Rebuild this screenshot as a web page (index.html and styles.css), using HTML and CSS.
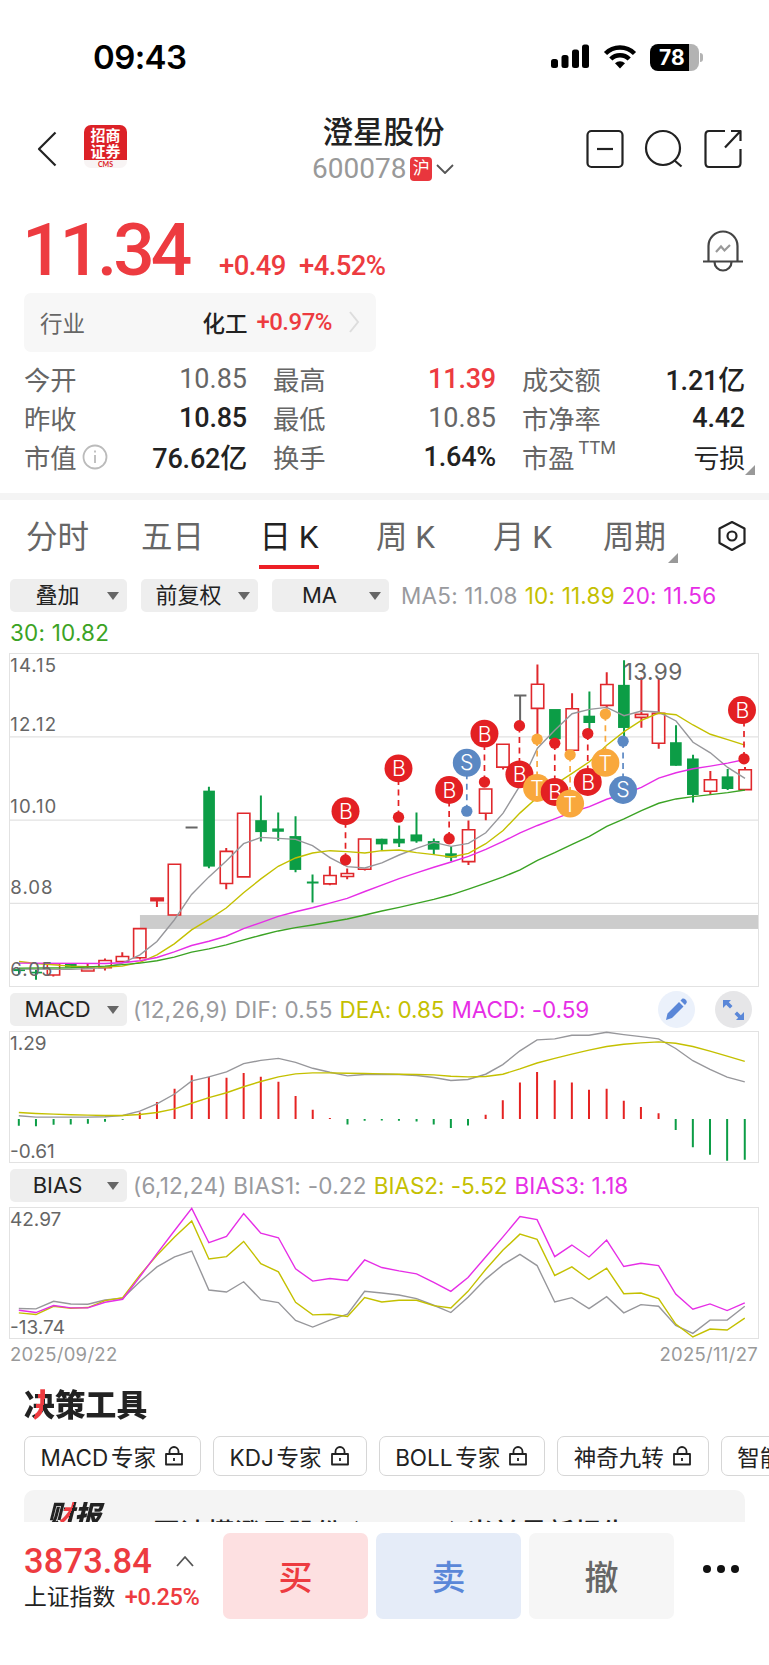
FILE: index.html
```
<!DOCTYPE html>
<html lang="zh-CN">

<head>
    <meta charset="utf-8">
    <meta name="viewport" content="width=device-width, initial-scale=1.0">
    <title>澄星股份 600078</title>
    <link rel="stylesheet" href="styles.css">
</head>

<body>
    <div class="statusbar">
        <span class="clock">09:43</span>
        <div class="status-icons">
            <svg width="40" height="26" viewBox="0 0 40 26">
                <rect x="1" y="15" width="7" height="9" rx="2.5" />
                <rect x="11.5" y="11" width="7" height="13" rx="2.5" />
                <rect x="22" y="5.5" width="7" height="18.5" rx="2.5" />
                <rect x="32" y="0.5" width="7" height="23.5" rx="2.5" />
            </svg>
            <svg class="wifi" width="34" height="26" viewBox="0 0 34 26">
                <path d="M2.5 9.5 A20.5 20.5 0 0 1 31.5 9.5" />
                <path d="M7.8 15 A13 13 0 0 1 26.2 15" />
                <path class="wifi-dot" d="M12 19.2 A7.5 7.5 0 0 1 22 19.2 L17 24.5 Z" />
            </svg>
            <div class="battery"><span>78</span></div>
        </div>
    </div>

    <div class="header">
        <svg class="line back" width="22" height="36" viewBox="0 0 22 36">
            <path d="M19.5 1.5 L3 18 L19.5 34.5" />
        </svg>
        <div class="broker">
            <b>招商<br>证券</b>
            <i>CMS</i>
        </div>
        <div class="title">
            <h1>澄星股份</h1>
            <div class="code">
                <span>600078</span>
                <em>沪</em>
                <svg class="line" width="20" height="12" viewBox="0 0 20 12">
                    <path d="M2 2 L10 10 L18 2" />
                </svg>
            </div>
        </div>
        <div class="actions">
            <svg class="line" width="40" height="40" viewBox="0 0 40 40">
                <rect x="2.5" y="2" width="35" height="36" rx="4" />
                <path d="M12 20 H28" />
            </svg>
            <svg class="line" width="40" height="40" viewBox="0 0 40 40">
                <circle cx="19" cy="19" r="17" />
                <path d="M30 31 L37.5 37.5" />
            </svg>
            <svg class="line" width="40" height="40" viewBox="0 0 40 40">
                <path d="M22 2 H6 Q2.5 2 2.5 6 V34 Q2.5 38 6 38 H34 Q37.5 38 37.5 34 V20" />
                <path d="M28 2 H37.5 V12 M37.5 2 L22 18.5" />
            </svg>
        </div>
    </div>

    <div class="quote">
        <div class="price">
            <strong>11.34</strong>
            <span class="diff">+0.49</span>
            <span class="pct">+4.52%</span>
        </div>
        <svg class="bell" width="42" height="42" viewBox="0 0 42 42">
            <path d="M1 31.5 H41 M6.5 31 V16 A14.5 14.5 0 0 1 35.5 16 V31 M12.5 32 A8.5 8.5 0 0 0 29.5 32" />
            <path class="bell-mark" d="M14 22 L19 16.5 L22.5 20.5 L28 15" />
        </svg>
    </div>

    <div class="industry">
        <span class="muted">行业</span>
        <span class="name">化工</span>
        <span class="up">+0.97%</span>
        <svg width="12" height="22" viewBox="0 0 12 22">
            <path d="M2 1 L10 11 L2 21" />
        </svg>
    </div>

    <div class="stats">
        <label>今开</label><span class="flat">10.85</span>
        <label>最高</label><span class="up">11.39</span>
        <label>成交额</label><span>1.21亿</span>
        <label>昨收</label><span>10.85</span>
        <label>最低</label><span class="flat">10.85</span>
        <label>市净率</label><span>4.42</span>
        <label>市值<svg width="26" height="26" viewBox="0 0 26 26">
                <circle cx="13" cy="13" r="11.5" />
                <path d="M13 11 V19 M13 6.5 V8.5" />
            </svg></label><span>76.62亿</span>
        <label>换手</label><span>1.64%</span>
        <label>市盈<sup>TTM</sup></label><span class="corner">亏损</span>
    </div>

    <div class="tabs">
        <span>分时</span>
        <span>五日</span>
        <span class="active">日 K</span>
        <span>周 K</span>
        <span>月 K</span>
        <span class="corner">周期</span>
        <svg class="line" width="32" height="32" viewBox="0 0 32 32">
            <path d="M16 2 L28.5 8.5 V23 L16 30 L3.5 23 V8.5 Z" />
            <circle cx="16" cy="16" r="4.5" />
        </svg>
    </div>

    <div class="indicators">
        <span class="select">叠加</span>
        <span class="select">前复权</span>
        <span class="select">MA</span>
        <span class="ma5">MA5: 11.08</span>
        <span class="ma10">10: 11.89</span>
        <span class="ma20">20: 11.56</span>
    </div>
    <div class="ma30">30: 10.82</div>

    <div class="chart kline">
        <svg viewBox="30 38 2245 1001" preserveAspectRatio="none">
            <path class="grid" d="M30 288 H2275 M30 539 H2275 M30 790 H2275" />
            <rect class="gap" x="420" y="825" width="1855" height="42" />

            <!-- candles: rising -->
            <g class="rise">
                <path d="M160 1006 V1010 M263 972 V985 M315 956 V962 M315 984 V992 M367 937 V950 M420 954 V959 M471 782 V801 M679 623 V633 M679 730 V747 M990 678 V706 M990 731 V735 M1042 685 V699 M1042 709 V717 M1095 687 V691 M1406 540 V568 M1406 664 V674 M1458 518 V539 M1510 379 V386" />
                <path d="M1613 70 V129 M1613 202 V282 M1717 156 V203 M1821 93 V130 M1821 193 V202 M1925 108 V219 M1925 230 V260 M1977 112 V217 M1977 307 V324 M2132 391 V417 M2132 452 V462 M2236 379 V387" />
                <rect x="142" y="972" width="37" height="34" />
                <rect x="245" y="986" width="37" height="8" />
                <rect x="297" y="962" width="37" height="22" />
                <rect x="349" y="950" width="37" height="15" />
                <rect x="401" y="866" width="37" height="88" />
                <rect class="solid" x="453" y="774" width="37" height="8" />
                <rect x="505" y="672" width="37" height="153" />
                <rect x="661" y="633" width="37" height="97" />
                <rect x="713" y="518" width="37" height="192" />
                <rect x="972" y="706" width="37" height="25" />
                <rect x="1024" y="700" width="37" height="9" />
                <rect x="1076" y="596" width="37" height="91" />
                <rect x="1388" y="568" width="37" height="96" />
                <rect x="1439" y="445" width="37" height="73" />
                <rect x="1491" y="310" width="37" height="69" />
                <rect x="1595" y="129" width="37" height="73" />
                <rect x="1699" y="203" width="37" height="125" />
                <rect x="1803" y="130" width="37" height="63" />
                <rect x="1907" y="220" width="37" height="9" />
                <rect x="1958" y="217" width="37" height="90" />
                <rect x="2114" y="417" width="37" height="35" />
                <rect x="2218" y="387" width="37" height="60" />
            </g>

            <!-- candles: falling -->
            <g class="fall">
                <path d="M57 985 V1003 M108 990 V1020 M627 438 V684 M783 465 V603 M835 516 V601 M887 527 V696 M938 703 V787 M1146 595 V630 M1198 555 V620 M1250 516 V607 M1302 594 V643 M1354 618 V663" />
                <path d="M1769 151 V265 M1873 57 V292 M2029 253 V375 M2080 342 V486 M2184 385 V448" />
                <rect x="40" y="988" width="35" height="6" />
                <rect x="91" y="996" width="35" height="5" />
                <rect x="195" y="972" width="35" height="11" />
                <rect x="610" y="450" width="35" height="229" />
                <rect x="766" y="539" width="35" height="36" />
                <rect x="817" y="564" width="35" height="10" />
                <rect x="869" y="587" width="35" height="102" />
                <rect x="921" y="724" width="35" height="6" />
                <rect x="1128" y="595" width="35" height="17" />
                <rect x="1180" y="595" width="35" height="14" />
                <rect x="1232" y="582" width="35" height="21" />
                <rect x="1284" y="602" width="35" height="26" />
                <rect x="1336" y="639" width="35" height="13" />
                <rect x="1648" y="204" width="35" height="91" />
                <rect x="1751" y="224" width="35" height="22" />
                <rect x="1855" y="131" width="35" height="130" />
                <rect x="2011" y="304" width="35" height="71" />
                <rect x="2062" y="353" width="35" height="110" />
                <rect x="2166" y="407" width="35" height="38" />
            </g>
            <path class="even" d="M557 561 H593 M1543 163 H1580 M1561 163 V242" />

            <polyline class="l1" points="57,988 212,989 315,984 367,970 420,945 471,905 523,840 575,763 627,710 679,662 731,610 783,591 835,594 887,597 938,616 990,652 1042,679 1095,683 1146,668 1198,644 1250,624 1302,606 1354,618 1406,609 1458,577 1510,518 1561,434 1613,322 1665,268 1717,218 1769,205 1821,199 1873,224 1925,210 1977,213 2029,240 2080,304 2132,336 2184,380 2236,413" />
            <polyline class="l2" points="57,965 108,971 212,979 315,982 367,979 420,968 471,945 523,912 575,870 627,838 679,804 731,758 783,716 835,678 887,653 938,638 990,631 1042,634 1095,638 1146,631 1198,629 1250,637 1302,643 1354,650 1406,639 1458,610 1510,570 1561,517 1613,470 1665,432 1717,398 1769,363 1821,313 1873,272 1925,238 1977,216 2029,221 2080,252 2132,280 2184,296 2236,313" />
            <polyline class="l3" points="57,970 315,971 367,969 420,963 471,953 523,936 575,917 627,904 679,889 731,866 783,848 835,829 887,815 938,803 990,789 1042,775 1095,754 1146,735 1198,715 1250,698 1302,681 1354,665 1406,648 1458,627 1510,603 1561,577 1613,555 1665,535 1717,515 1769,498 1821,476 1873,460 1925,440 1977,412 2029,396 2080,384 2132,376 2184,367 2236,356" />
            <polyline class="l4" points="57,985 212,984 315,979 420,970 471,963 523,952 575,937 627,927 679,915 731,900 783,886 835,873 887,863 938,855 990,846 1042,837 1095,825 1146,813 1198,802 1250,790 1302,778 1354,764 1406,747 1458,729 1510,710 1561,689 1613,660 1665,637 1717,612 1769,588 1821,558 1873,535 1925,510 1977,488 2029,475 2080,468 2132,462 2184,456 2236,448" />

            <!-- trade markers -->
            <g class="mark buy">
                <path d="M1037 512 V659 M1196 383 V530 M1348 448 V595 M1454 278 V424 M1559 401 V254 M1665 454 V307 M1764 424 V278 M2233 207 V354" />
                <circle cx="1037" cy="659" r="17" />
                <circle cx="1196" cy="530" r="17" />
                <circle cx="1348" cy="595" r="17" />
                <circle cx="1454" cy="424" r="17" />
                <circle cx="1559" cy="254" r="17" />
                <circle cx="1665" cy="307" r="17" />
                <circle cx="1764" cy="278" r="17" />
                <circle cx="2233" cy="354" r="17" />
            </g>
            <g class="mark both">
                <path d="M1612 442 V295 M1711 489 V342 M1817 366 V219" />
                <circle cx="1612" cy="295" r="17" />
                <circle cx="1711" cy="342" r="17" />
                <circle cx="1817" cy="219" r="17" />
            </g>
            <g class="mark sell">
                <path d="M1401 366 V512 M1870 448 V301" />
                <circle cx="1401" cy="512" r="17" />
                <circle cx="1870" cy="301" r="17" />
            </g>
            <g class="mark buy"><circle cx="1037" cy="512" r="42" /><text x="1038" y="536">B</text></g>
            <g class="mark buy"><circle cx="1196" cy="383" r="42" /><text x="1197" y="407">B</text></g>
            <g class="mark buy"><circle cx="1348" cy="448" r="42" /><text x="1349" y="472">B</text></g>
            <g class="mark sell"><circle cx="1401" cy="366" r="42" /><text x="1401" y="388">S</text></g>
            <g class="mark buy"><circle cx="1454" cy="278" r="42" /><text x="1455" y="302">B</text></g>
            <g class="mark buy"><circle cx="1559" cy="401" r="42" /><text x="1560" y="425">B</text></g>
            <g class="mark both"><circle cx="1612" cy="442" r="42" /><text x="1612" y="466">T</text></g>
            <g class="mark buy"><circle cx="1665" cy="454" r="42" /><text x="1666" y="478">B</text></g>
            <g class="mark both"><circle cx="1711" cy="489" r="42" /><text x="1711" y="513">T</text></g>
            <g class="mark buy"><circle cx="1764" cy="424" r="42" /><text x="1765" y="448">B</text></g>
            <g class="mark both"><circle cx="1817" cy="366" r="42" /><text x="1817" y="390">T</text></g>
            <g class="mark sell"><circle cx="1870" cy="448" r="42" /><text x="1870" y="470">S</text></g>
            <g class="mark buy"><circle cx="2227" cy="207" r="42" /><text x="2228" y="231">B</text></g>

            <g class="axis">
                <text x="31" y="93">14.15</text>
                <text x="31" y="271">12.12</text>
                <text x="31" y="517">10.10</text>
                <text x="31" y="763">8.08</text>
                <text x="31" y="1009">6.05</text>
                <text class="peak" x="1872" y="117">13.99</text>
            </g>
        </svg>
    </div>

    <div class="indicators sub">
        <span class="select">MACD</span>
        <span class="ma5">(12,26,9) DIF: 0.55</span>
        <span class="ma10">DEA: 0.85</span>
        <span class="ma20">MACD: -0.59</span>
        <div class="tools">
            <svg width="37" height="37" viewBox="0 0 37 37">
                <circle class="blue-bg" cx="18.5" cy="18.5" r="18.5" />
                <path class="blue" d="M8 29 L9.5 22.5 L21 11 L25.5 15.5 L14 27 Z M22.5 9.5 L24.5 7.5 Q26 7 27.5 8.5 Q29.5 10.5 28.5 12 L27 14 Z" />
            </svg>
            <svg width="37" height="37" viewBox="0 0 37 37">
                <circle class="gray-bg" cx="18.5" cy="18.5" r="18.5" />
                <path class="blue" d="M8 9 H16 L13.8 11.2 L17.5 15 L15 17.5 L11.2 13.8 L8 17 Z M29 29 H21 L23.2 26.8 L19.5 23 L22 20.5 L25.8 24.2 L29 21 Z" />
            </svg>
        </div>
    </div>
    <div class="chart">
        <svg viewBox="20 154 1527 394" preserveAspectRatio="none">
            <path class="bar-up" d="M285 418 V398 M320 418 V366 M356 418 V326 M391 418 V285 M426 418 V290 M462 418 V293 M497 418 V278 M532 418 V290 M568 418 V305 M603 418 V348 M638 418 V390 M673 418 V415 M991 418 V405 M1026 418 V361 M1061 418 V307 M1096 418 V275 M1132 418 V300 M1167 418 V307 M1202 418 V329 M1238 418 V326 M1273 418 V362 M1308 418 V381 M1344 418 V400" />
            <path class="bar-down" d="M38 418 V438 M73 418 V440 M109 418 V435 M144 418 V434 M179 418 V432 M214 418 V426 M250 418 V420 M709 418 V434 M744 418 V423 M779 418 V422 M814 418 V423 M850 418 V425 M885 418 V434 M920 418 V445 M955 418 V437 M1379 418 V451 M1414 418 V503 M1449 418 V526 M1484 418 V544 M1520 418 V541" />
            <polyline class="l1" points="38,408 73,412 109,412 144,412 179,412 214,411 250,407 285,394 320,372 356,342 391,302 426,290 462,275 497,250 532,240 568,234 603,246 638,264 673,276 709,287 744,283 779,282 814,283 850,286 885,292 920,301 955,298 991,282 1026,253 1061,211 1096,178 1132,175 1167,164 1202,164 1238,155 1273,162 1308,168 1344,175 1379,204 1414,241 1449,267 1484,291 1520,305" />
            <polyline class="l2" points="38,398 73,401 109,403 144,405 179,406 214,407 250,407 285,404 320,398 356,387 391,370 426,353 462,338 497,320 532,304 568,290 603,281 638,278 673,278 709,279 744,280 779,281 814,282 850,283 885,284 920,288 955,290 991,289 1026,282 1061,266 1096,248 1132,234 1167,221 1202,209 1238,198 1273,191 1308,187 1344,184 1379,188 1414,198 1449,212 1484,227 1520,243" />
        </svg>
        <span class="max">1.29</span>
        <span class="min">-0.61</span>
    </div>

    <div class="indicators sub">
        <span class="select">BIAS</span>
        <span class="ma5">(6,12,24) BIAS1: -0.22</span>
        <span class="ma10">BIAS2: -5.52</span>
        <span class="ma20">BIAS3: 1.18</span>
    </div>
    <div class="chart">
        <svg viewBox="20 142 1527 393" preserveAspectRatio="none">
            <polyline class="l1" points="38,446 73,447 109,424 144,432 179,433 214,420 250,415 285,365 320,320 356,290 391,272 426,390 462,396 497,365 532,419 568,428 603,482 638,502 673,481 709,463 744,394 779,399 814,405 850,416 885,436 920,458 955,412 991,357 1026,314 1061,282 1096,316 1132,426 1167,413 1202,446 1238,410 1273,459 1308,434 1344,439 1379,497 1414,521 1449,481 1484,481 1520,439" />
            <polyline class="l2" points="38,459 73,464 109,439 144,445 179,443 214,422 250,413 285,345 320,285 356,230 391,181 426,296 462,289 497,243 532,310 568,335 603,427 638,465 673,463 709,470 744,413 779,426 814,421 850,421 885,437 920,444 955,394 991,328 1026,270 1061,221 1096,237 1132,346 1167,320 1202,358 1238,324 1273,401 1308,399 1344,416 1379,493 1414,532 1449,508 1484,511 1520,475" />
            <polyline class="l3" points="38,451 73,458 109,437 144,444 179,444 214,427 250,418 285,350 320,280 356,210 391,143 426,247 462,228 497,159 532,218 568,232 603,326 638,363 673,355 709,361 744,299 779,322 814,332 850,341 885,367 920,394 955,352 991,290 1026,230 1061,168 1096,177 1132,289 1167,254 1202,290 1238,239 1273,319 1308,309 1344,316 1379,402 1414,448 1449,432 1484,452 1520,429" />
        </svg>
        <span class="max">42.97</span>
        <span class="min">-13.74</span>
    </div>
    <div class="dates"><span>2025/09/22</span><span>2025/11/27</span></div>

    <h2>决策工具</h2>
    <div class="chips">
        <span class="chip">MACD 专家<svg class="line" viewBox="0 0 20 20"><path d="M2 8 H18 V18.5 H2 Z M5.5 8 V5.5 A4.5 4.5 0 0 1 14.5 5.5 V8 M10 12 V15" /></svg></span>
        <span class="chip">KDJ 专家<svg class="line" viewBox="0 0 20 20"><path d="M2 8 H18 V18.5 H2 Z M5.5 8 V5.5 A4.5 4.5 0 0 1 14.5 5.5 V8 M10 12 V15" /></svg></span>
        <span class="chip">BOLL 专家<svg class="line" viewBox="0 0 20 20"><path d="M2 8 H18 V18.5 H2 Z M5.5 8 V5.5 A4.5 4.5 0 0 1 14.5 5.5 V8 M10 12 V15" /></svg></span>
        <span class="chip">神奇九转<svg class="line" viewBox="0 0 20 20"><path d="M2 8 H18 V18.5 H2 Z M5.5 8 V5.5 A4.5 4.5 0 0 1 14.5 5.5 V8 M10 12 V15" /></svg></span>
        <span class="chip">智能</span>
    </div>
    <div class="report">
        <b>财报</b>
        <span>一图读懂澄星股份 (600078) 当前最新报告</span>
    </div>

    <div class="footer">
        <div class="index">
            <div class="index-value">3873.84
                <svg class="line" width="20" height="16" viewBox="0 0 20 16">
                    <path d="M2 13 L10 4 L18 13" />
                </svg>
            </div>
            <div class="index-name">上证指数 <span class="up">+0.25%</span></div>
        </div>
        <button class="buy-btn">买</button>
        <button class="sell-btn">卖</button>
        <button class="cancel-btn">撤</button>
        <div class="more"><i></i><i></i><i></i></div>
    </div>
</body>

</html>
```
FILE: styles.css
```
* {
    box-sizing: border-box;
}

body {
    margin: 0;
    width: 769px;
    height: 1665px;
    overflow: hidden;
    display: flex;
    flex-direction: column;
    background: #fff;
    color: #222;
    font-family: Roboto, "Noto Sans CJK SC", sans-serif;
}

body > * {
    flex-shrink: 0;
}

svg {
    display: block;
    flex-shrink: 0;
}

.line {
    fill: none;
    stroke: #222;
    stroke-width: 2.2;
    stroke-linejoin: round;
}

.up {
    color: #ed3b40;
}

/* status bar */
.statusbar {
    height: 116px;
    padding: 0 70px 2px 93px;
    display: flex;
    justify-content: space-between;
    align-items: center;
    color: #000;
}

.clock {
    font: 600 33px Inter, sans-serif;
    letter-spacing: -0.6px;
}

.status-icons {
    display: flex;
    align-items: center;
    gap: 13px;
}

.wifi {
    fill: none;
    stroke: #000;
    stroke-width: 4.5;
}

.wifi .wifi-dot {
    fill: #000;
    stroke: none;
}

.battery {
    position: relative;
    width: 49px;
    height: 27px;
    border-radius: 8px;
    background: linear-gradient(90deg, #000 79%, #b3b3b3 79%);
    color: #fff;
    font: 700 21px/27px Inter, sans-serif;
    padding-left: 9px;
}

.battery::after {
    content: "";
    position: absolute;
    right: -4px;
    top: 9px;
    width: 3px;
    height: 9px;
    border-radius: 0 4px 4px 0;
    background: #b3b3b3;
}

/* header */
.header {
    height: 96px;
    padding: 0 26px 0 36px;
    display: grid;
    grid-template-columns: 48px 228px 143px 1fr;
    align-items: start;
}

.back {
    margin-top: 15px;
}

.broker {
    margin-top: 9px;
    width: 43px;
    height: 43px;
    border-radius: 7px;
    overflow: hidden;
    background: linear-gradient(#dc2127 35px, #f8f4f4 35px);
    color: #fff;
    text-align: center;
}

.broker b {
    display: block;
    height: 35px;
    padding-top: 2px;
    font: 700 15px/16px "Noto Sans CJK SC", sans-serif;
}

.broker i {
    display: block;
    font: 700 7px/8px Lato, sans-serif;
    color: #dc2127;
}

.title {
    padding-top: 1px;
    text-align: center;
}

h1 {
    margin: 0;
    font-size: 30.5px;
    font-weight: 500;
    line-height: 32px;
    white-space: nowrap;
}

.code {
    margin-top: 6px;
    display: flex;
    align-items: center;
    color: #999;
    font-size: 28px;
    line-height: 28px;
}

.code em {
    width: 24px;
    height: 24px;
    margin: 0 3px 0 4px;
    border-radius: 4px;
    background: #e9363d;
    color: #fff;
    font-size: 17px;
    line-height: 23px;
    font-style: normal;
}

.code .line {
    stroke: #555;
    stroke-width: 1.8;
}

.actions {
    display: flex;
    justify-content: flex-end;
    gap: 19px;
    margin-top: 13px;
}

/* quote */
.quote {
    height: 81px;
    padding: 0 25px 0 22px;
    display: flex;
    justify-content: space-between;
}

.price {
    display: flex;
    align-items: baseline;
    color: #ed3b40;
}

.price strong {
    width: 197px;
    font-size: 73px;
    line-height: 76px;
    font-weight: 500;
    letter-spacing: -4px;
}

.diff,
.pct {
    width: 80px;
    font-size: 27.5px;
    font-weight: 500;
    letter-spacing: -0.6px;
}

.bell {
    margin-top: 18px;
    fill: none;
    stroke: #444;
    stroke-width: 2.2;
}

.bell .bell-mark {
    stroke: #999;
}

.industry {
    width: 352px;
    height: 59px;
    margin-left: 24px;
    padding: 0 16px 1px;
    display: flex;
    align-items: center;
    border-radius: 7px;
    background: #f7f7f7;
    font-size: 22.5px;
}

.muted {
    flex: 1;
    color: #666;
}

.name {
    font-weight: 500;
    margin-right: 9px;
}

.industry .up {
    font-size: 24px;
    font-weight: 500;
    letter-spacing: -0.5px;
    margin-right: 16px;
}

.industry svg {
    fill: none;
    stroke: #ddd;
    stroke-width: 2;
}

.stats {
    height: 141px;
    padding: 7px 24px 0;
    display: grid;
    grid-template-columns: 90px 159px 90px 159px 90px 133px;
    grid-auto-rows: 39px;
    align-items: center;
    font-size: 26.3px;
}

.stats label {
    display: flex;
    align-items: center;
    color: #666;
    white-space: nowrap;
}

.stats label svg {
    margin-left: 5px;
    fill: none;
    stroke: #bbb;
    stroke-width: 1.8;
}

.stats sup {
    font-size: 18px;
    line-height: 18px;
    margin: -18px 0 0 4px;
}

.stats span {
    text-align: right;
    font-weight: 500;
    font-size: 27px;
    letter-spacing: -0.2px;
    padding-right: 26px;
}

.stats span:nth-of-type(3n) {
    padding-right: 0;
}

.stats .flat {
    color: #666;
    font-weight: 400;
    letter-spacing: 0;
}

.corner {
    position: relative;
}

.stats .corner {
    font-size: 26px;
    font-weight: 400;
}

.corner::after {
    content: "";
    position: absolute;
    right: -10px;
    bottom: 0;
    border-left: 10px solid transparent;
    border-bottom: 10px solid #999;
}

/* period tabs */
.tabs {
    height: 86px;
    border-top: 7px solid #f4f4f4;
    padding-left: 26px;
    display: grid;
    grid-template-columns: 115px 118px 117px 117px 110px 112px 1fr;
    justify-items: start;
    align-items: start;
    font-size: 31.5px;
    line-height: 76px;
    color: #666;
    white-space: nowrap;
}

.tabs .active {
    width: 60px;
    height: 69px;
    border-bottom: 4px solid #ed2026;
    text-align: center;
    color: #222;
}

.tabs .corner::after {
    bottom: 13px;
    right: -12px;
}

.tabs svg {
    margin: 20px 0 0 1px;
}

/* indicator rows */
.indicators {
    height: 33px;
    padding-left: 10px;
    display: flex;
    align-items: center;
    font-family: Inter, "Noto Sans CJK SC", sans-serif;
    font-size: 22.5px;
    letter-spacing: 0.2px;
    white-space: nowrap;
}

.select {
    position: relative;
    width: 117px;
    height: 33px;
    margin-right: 14px;
    padding-right: 22px;
    border-radius: 5px;
    background: #eee;
    text-align: center;
    line-height: 33px;
    font-size: 22px;
    letter-spacing: 0;
}

.select::after {
    content: "";
    position: absolute;
    right: 8px;
    top: 13px;
    border: 6px solid transparent;
    border-top: 8px solid #666;
    border-bottom: 0;
}

.ma5 {
    margin-left: -2px;
    color: #999a9e;
    margin-right: 7px;
}

.ma10 {
    color: #c4c000;
    margin-right: 7px;
}

.ma20 {
    color: #e62ee6;
}

.ma30 {
    height: 41px;
    padding-left: 10px;
    color: #3ba324;
    font: 22.5px/41px Inter, sans-serif;
    letter-spacing: 0.2px;
}

.sub {
    margin: 6px 0 5px;
    letter-spacing: -0.05px;
}

.sub .ma5 {
    letter-spacing: 0.25px;
}

.sub .select {
    margin-right: 8px;
}

.tools {
    margin: 0 17px 0 auto;
    display: flex;
    gap: 20px;
}

.blue-bg {
    fill: #ebf1fb;
}

.gray-bg {
    fill: #e6e6e8;
}

.blue {
    fill: #5a87d8;
}

/* charts */
.chart {
    position: relative;
    width: 750px;
    height: 132px;
    margin-left: 9px;
    border: 1px solid #e2e2e2;
}

.kline {
    height: 334px;
}

.chart svg {
    width: 100%;
    height: 100%;
    overflow: visible;
}

.chart path,
.chart polyline,
.rise rect {
    fill: none;
    stroke-width: 1.4px;
    vector-effect: non-scaling-stroke;
}

.chart .grid {
    stroke: #e2e2e2;
}

.gap {
    fill: #ccc;
}

.rise path,
.rise rect {
    stroke: #e0282c;
}

.rise rect {
    fill: #fff;
    stroke-width: 1.6px;
}

.rise .solid {
    fill: #e0282c;
}

.fall {
    fill: #0c9d46;
    stroke: #0c9d46;
}

.rise path,
.fall path,
.even {
    stroke-width: 2px !important;
}

.fall rect {
    stroke: none;
}

.even {
    stroke: #666;
}

.l1 {
    stroke: #97979b;
}

.l2 {
    stroke: #c4c000;
}

.l3 {
    stroke: #e62ee6;
}

.l4 {
    stroke: #3ba324;
}

.bar-up {
    stroke: #e52322;
    stroke-width: 2px !important;
}

.bar-down {
    stroke: #0c9d46;
    stroke-width: 2px !important;
}

.mark path {
    stroke-width: 1.7px;
    stroke-dasharray: 6 4.5;
}

.buy {
    fill: #e32023;
    stroke: #e32023;
}

.sell {
    fill: #5b88c3;
    stroke: #5b88c3;
}

.both {
    fill: #f9a83c;
    stroke: #f9a83c;
}

.mark circle {
    stroke: none;
}

.mark text {
    fill: #fff;
    stroke: none;
    font: 300 64px Inter, sans-serif;
    text-anchor: middle;
}

.axis {
    fill: #666;
    font: 56px Inter, sans-serif;
    letter-spacing: 3px;
}

.peak {
    font-size: 68px;
    letter-spacing: 1px;
}

.max,
.min {
    position: absolute;
    left: 0;
    font: 19px/20px Inter, sans-serif;
    color: #666;
}

.max {
    top: 2px;
}

.min {
    bottom: 0;
}

.dates {
    height: 32px;
    padding: 0 11px 0 10px;
    display: flex;
    justify-content: space-between;
    font: 18.5px/31px Inter, sans-serif;
    letter-spacing: 0.3px;
    color: #999;
}

/* decision tools */
h2 {
    margin: 12px 0 8px 24px;
    height: 45px;
    line-height: 46px;
    font-size: 30.8px;
    font-weight: 900;
    background: linear-gradient(100deg, #222 16px, #ed3b40 16px, #ed3b40 23px, #222 23px);
    background-clip: text;
    -webkit-background-clip: text;
    color: transparent;
}

.chips {
    display: flex;
    gap: 12px;
    padding-left: 24px;
    overflow: hidden;
}

.chip {
    flex-shrink: 0;
    height: 40px;
    padding: 0 16px 0 15.5px;
    display: flex;
    align-items: center;
    border: 1px solid #d6d6d6;
    border-radius: 7px;
    font-family: Inter, "Noto Sans CJK SC", sans-serif;
    font-size: 22.5px;
    word-spacing: -3.5px;
}

.chip svg {
    width: 20px;
    height: 20px;
    margin-left: 8px;
    stroke-width: 1.8;
}

.report {
    margin: 14px 24px 0;
    height: 32px;
    padding: 9px 23px 0;
    overflow: hidden;
    display: flex;
    background: #f4f4f4;
    border-radius: 10px 10px 0 0;
}

.report b {
    width: 79px;
    font-size: 27px;
    line-height: 34px;
    font-weight: 900;
    font-style: italic;
    background: linear-gradient(110deg, #222 20px, #ed3b40 20px, #ed3b40 27px, #222 27px);
    background-clip: text;
    -webkit-background-clip: text;
    color: transparent;
}

.report span {
    font-size: 27px;
    line-height: 70px;
    font-weight: 500;
    white-space: nowrap;
}

/* bottom bar */
.footer {
    height: 143px;
    padding: 11px 30px 0 24px;
    display: flex;
    align-items: flex-start;
    background: #fff;
}

.index {
    width: 199px;
    color: #ed3b40;
}

.index-value {
    display: flex;
    align-items: center;
    gap: 23px;
    height: 32px;
    font-size: 34.5px;
    font-weight: 500;
    letter-spacing: 0.1px;
    margin-top: 12px;
}

.index-value .line {
    stroke: #555;
    stroke-width: 1.8;
}

.index-name {
    color: #222;
    font-size: 22.8px;
    line-height: 40px;
    white-space: nowrap;
}

.index-name .up {
    font-size: 23.5px;
    font-weight: 500;
    letter-spacing: -0.4px;
    margin-left: 4px;
}

button {
    width: 145px;
    height: 86px;
    margin-right: 8px;
    padding: 0;
    border: 0;
    border-radius: 7px;
    font: 500 34px/84px "Noto Sans CJK SC", sans-serif;
}

.buy-btn {
    background: #fde0e1;
    color: #ed3b40;
}

.sell-btn {
    background: #e5ecf8;
    color: #5a87d8;
}

.cancel-btn {
    background: #f6f6f6;
    color: #666;
}

.more {
    display: flex;
    gap: 6px;
    margin: 32px 0 0 auto;
}

.more i {
    width: 8px;
    height: 8px;
    border-radius: 50%;
    background: #111;
}
```
